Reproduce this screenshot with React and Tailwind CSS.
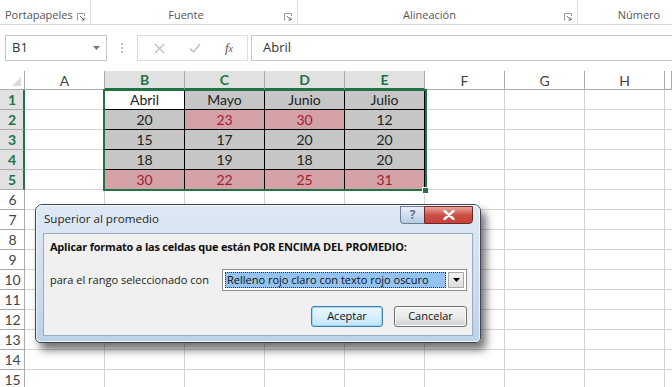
import React from 'react';

const cols = ['A', 'B', 'C', 'D', 'E', 'F', 'G', 'H', 'I'];
const selCols = ['B', 'C', 'D', 'E'];

// G = gris, R = rojo claro (encima del promedio), W = blanco
const data = {
  1: [['Abril', 'W'], ['Mayo', 'G'], ['Junio', 'G'], ['Julio', 'G']],
  2: [['20', 'G'], ['23', 'R'], ['30', 'R'], ['12', 'G']],
  3: [['15', 'G'], ['17', 'G'], ['20', 'G'], ['20', 'G']],
  4: [['18', 'G'], ['19', 'G'], ['18', 'G'], ['20', 'G']],
  5: [['30', 'R'], ['22', 'R'], ['25', 'R'], ['31', 'R']],
};

const rows = Array.from({ length: 15 }, (_, i) => i + 1);

const Launcher = () => (
  <svg width="8" height="8" viewBox="0 0 8 8" className="shrink-0">
    <path d="M0.5 7.5V0.5H7.5V3" fill="none" stroke="#9a9a9a" strokeWidth="1" />
    <path d="M3 3L7 7M7 4.5V7H4.5" fill="none" stroke="#6a6a6a" strokeWidth="1" />
  </svg>
);

const RibbonGroup = ({ label, width, launcher = true, align = 'center' }) => (
  <div
    className={`h-full flex items-end pb-[1px] border-r border-[#dadada] ${align === 'left' ? 'pl-[5px]' : 'justify-center pr-[16px]'} relative`}
    style={{ width }}
  >
    <span className="text-[11px] text-[#555]">{label}</span>
    {launcher && (
      <div className="absolute right-[5px] top-[13px]">
        <Launcher />
      </div>
    )}
  </div>
);

const DataCell = ({ text, kind }) => {
  const bg = kind === 'W' ? 'bg-white' : kind === 'R' ? 'bg-[#d3a1a6]' : 'bg-[#c6c6c6]';
  const color = kind === 'R' ? 'text-[#a0202e]' : 'text-[#222]';
  return (
    <div className={`w-[80px] h-full shrink-0 flex items-center justify-center border-r border-b border-black ${bg} ${color}`}>
      {text}
    </div>
  );
};

export default function App() {
  return (
    <div className="w-[672px] h-[387px] overflow-hidden bg-white relative font-['Open_Sans',sans-serif]">
      {/* Ribbon group labels */}
      <div className="h-[25px] flex border-b border-[#d5d5d5]">
        <RibbonGroup label="Portapapeles" width={91} align="left" />
        <RibbonGroup label="Fuente" width={207} />
        <RibbonGroup label="Alineación" width={280} />
        <div className="flex-1 flex items-end pb-[1px] justify-center pl-[28px]">
          <span className="text-[11px] text-[#555]">Número</span>
        </div>
      </div>

      {/* Formula bar */}
      <div className="h-[26px] mt-[10px] flex items-stretch">
        <div className="ml-[5px] w-[102px] border border-[#c6c6c6] flex items-center justify-between pl-[6px] pr-[6px]">
          <span className="text-[13px] text-[#333]">B1</span>
          <svg width="7" height="4" viewBox="0 0 7 4"><path d="M0 0H7L3.5 4Z" fill="#777" /></svg>
        </div>
        <div className="w-[30px] flex flex-col items-center justify-center gap-[2px]">
          <span className="w-[2px] h-[2px] bg-[#bdbdbd]" />
          <span className="w-[2px] h-[2px] bg-[#bdbdbd]" />
          <span className="w-[2px] h-[2px] bg-[#bdbdbd]" />
        </div>
        <div className="w-[111px] border border-[#dcdcdc] flex items-center justify-around pl-[4px] pr-[2px]">
          <svg width="11" height="11" viewBox="0 0 11 11"><path d="M1 1L10 10M10 1L1 10" stroke="#bcbcbc" strokeWidth="1.3" /></svg>
          <svg width="12" height="10" viewBox="0 0 12 10"><path d="M1 5.5L4.5 9L11 1" fill="none" stroke="#bcbcbc" strokeWidth="1.3" /></svg>
          <span className="text-[13px] italic text-[#555] font-['Liberation_Serif',serif]">f<span className="text-[10px]">x</span></span>
        </div>
        <div className="w-[3px]" />
        <div className="flex-1 border-t border-b border-l border-[#c6c6c6] flex items-center pl-[11px]">
          <span className="text-[13px] text-[#333]">Abril</span>
        </div>
      </div>

      {/* Sheet grid */}
      <div className="mt-[10px] font-['Lato',sans-serif] text-[14px]">
        {/* Column headers */}
        <div className="h-[19px] flex">
          <div className="w-[25px] shrink-0 h-full border-r border-b border-[#ababab] relative">
            <svg width="9" height="9" viewBox="0 0 9 9" className="absolute right-[3px] bottom-[3px]">
              <path d="M9 0V9H0Z" fill="#dadada" />
            </svg>
          </div>
          {cols.map((c) => {
            const sel = selCols.includes(c);
            return (
              <div
                key={c}
                className={`h-full flex items-center justify-center ${c === 'I' ? 'flex-1' : 'w-[80px] shrink-0'} ${
                  sel
                    ? 'bg-[#e1e1e1] text-[#217346] font-bold border-r border-r-[#ababab] border-b-2 border-b-[#217346]'
                    : 'text-[#444] border-r border-b border-[#ababab]'
                }`}
              >
                {c === 'I' ? '' : c}
              </div>
            );
          })}
        </div>

        {/* Rows */}
        <div className="relative">
          {rows.map((r) => {
            const sel = r <= 5;
            return (
              <div key={r} className="h-[20px] flex">
                <div
                  className={`w-[25px] shrink-0 h-full flex items-center justify-center pl-[1px] ${
                    sel
                      ? 'bg-[#e1e1e1] text-[#217346] font-bold border-r-2 border-r-[#217346] border-b border-b-[#ababab]'
                      : 'text-[#444] border-r border-b border-[#ababab]'
                  }`}
                >
                  {r}
                </div>
                {cols.map((c) => {
                  const idx = selCols.indexOf(c);
                  if (sel && idx >= 0) {
                    const [t, k] = data[r][idx];
                    return <DataCell key={c} text={t} kind={k} />;
                  }
                  const blackRight = sel && c === 'A';
                  return (
                    <div
                      key={c}
                      className={`h-full border-b border-[#d4d4d4] ${c === 'I' ? 'flex-1' : 'w-[80px] shrink-0 border-r'} ${
                        blackRight ? 'border-r-black' : ''
                      }`}
                    />
                  );
                })}
              </div>
            );
          })}

          {/* Selection outline B1:E5 */}
          <div className="absolute left-[103px] top-[-1px] w-[324px] h-[102px] border-2 border-[#217346] pointer-events-none" />
          <div className="absolute left-[422px] top-[97px] w-[7px] h-[7px] bg-[#217346] border border-white" />
        </div>
      </div>

      {/* Dialog */}
      <div className="absolute left-[35px] top-[204px] w-[446px] h-[139px] rounded-t-[7px] rounded-b-[5px] border border-[#3d4550] bg-gradient-to-b from-[#dfe9f5] via-[#cfdff0] to-[#bcd2ea] shadow-[5px_7px_9px_rgba(0,0,0,0.55)] font-['Open_Sans',sans-serif]">
        <div className="absolute inset-0 rounded-t-[6px] rounded-b-[4px] border border-white/70 pointer-events-none" />

        {/* Title bar */}
        <div className="h-[28px] flex items-center pl-[8px] relative">
          <span className="text-[11.6px] text-[#1e1e1e]">Superior al promedio</span>
          <div className="absolute right-[7px] top-[1px] flex h-[18px]">
            <div className="w-[24px] h-full rounded-bl-[4px] border border-[#6d7f96] border-r-0 bg-gradient-to-b from-[#e8f0f9] to-[#b9cce3] flex items-center justify-center text-[12px] font-bold text-[#5f6f84] leading-none">
              ?
            </div>
            <div className="w-[49px] h-full rounded-br-[4px] border border-[#6b2a2a] bg-gradient-to-b from-[#e8a7a0] via-[#cc4f45] to-[#c8403a] flex items-center justify-center">
              <svg width="12" height="10" viewBox="0 0 12 10">
                <path d="M1.5 1L10.5 9M10.5 1L1.5 9" stroke="#fff" strokeWidth="2.4" strokeLinecap="round" />
              </svg>
            </div>
          </div>
        </div>

        {/* Content panel */}
        <div className="absolute left-[7px] right-[7px] top-[28px] bottom-[6px] bg-[#f0f0f0] border border-[#97abc4] flex flex-col pl-[6px] pr-[5px] pt-[6px]">
          <div className="h-[14px] flex items-center text-[11px] font-bold text-[#111] tracking-[-0.22px]">
            Aplicar formato a las celdas que están POR ENCIMA DEL PROMEDIO:
          </div>
          <div className="mt-[15px] h-[22px] flex items-center">
            <span className="text-[11px] text-[#222] w-[172px] shrink-0">para el rango seleccionado con</span>
            <div className="flex-1 h-full border border-[#8e8f8f] bg-white flex items-center p-[2px]">
              <div className="flex-1 h-full bg-[#93c3ee] border border-dotted border-[#333] flex items-center pl-[1px] text-[11px] text-[#111]">
                Relleno rojo claro con texto rojo oscuro
              </div>
              <div className="w-[16px] h-full ml-[2px] border border-[#a9a9a9] bg-gradient-to-b from-[#f4f4f4] to-[#dcdcdc] flex items-center justify-center">
                <svg width="7" height="4" viewBox="0 0 7 4"><path d="M0 0H7L3.5 4Z" fill="#000" /></svg>
              </div>
            </div>
          </div>
          <div className="mt-[15px] flex justify-end gap-[11px]">
            <div className="w-[72px] h-[21px] rounded-[3px] border border-[#3c7fb1] bg-gradient-to-b from-[#eaf6fd] via-[#d9f0fc] to-[#bee6fd] shadow-[inset_0_0_0_1px_#9fd4f3] flex items-center justify-center text-[11px] text-[#111]">
              Aceptar
            </div>
            <div className="w-[73px] h-[21px] rounded-[3px] border border-[#707070] bg-gradient-to-b from-[#f2f2f2] via-[#ebebeb] to-[#cfcfcf] shadow-[inset_0_0_0_1px_#fcfcfc] flex items-center justify-center text-[11px] text-[#111]">
              Cancelar
            </div>
          </div>
        </div>
      </div>
    </div>
  );
}
